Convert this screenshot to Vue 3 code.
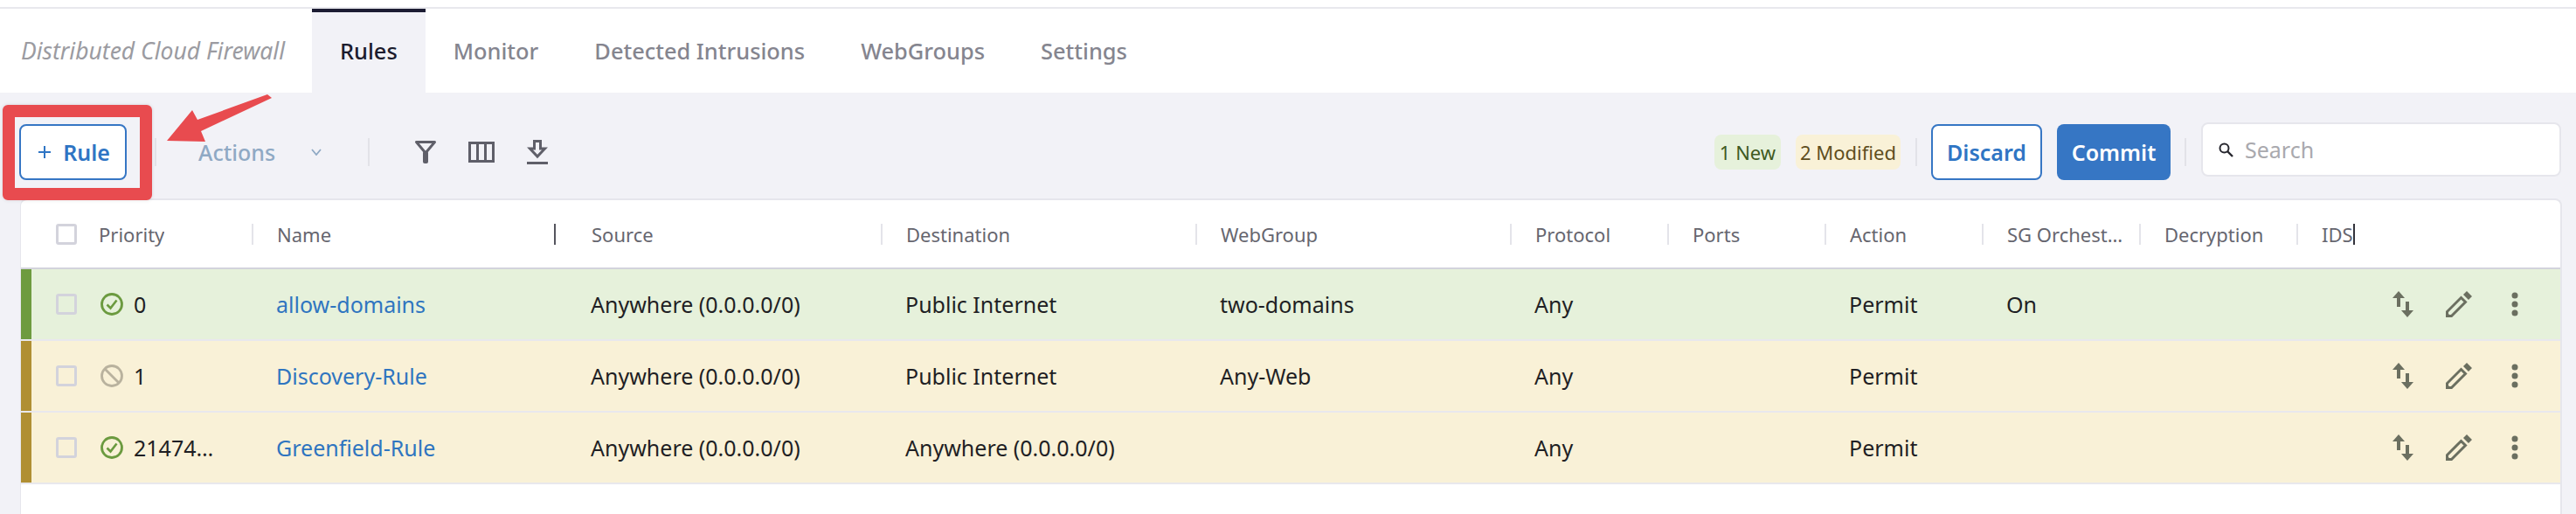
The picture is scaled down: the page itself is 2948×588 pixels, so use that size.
<script setup>
const tabs = ['Rules', 'Monitor', 'Detected Intrusions', 'WebGroups', 'Settings'];
const columns = ['Priority', 'Name', 'Source', 'Destination', 'WebGroup', 'Protocol', 'Ports', 'Action', 'SG Orchestration', 'Decryption', 'IDS'];
const rules = [
  { state: 'new', enabled: true, priority: '0', name: 'allow-domains', source: 'Anywhere (0.0.0.0/0)', destination: 'Public Internet', webgroup: 'two-domains', protocol: 'Any', action: 'Permit', sg: 'On' },
  { state: 'modified', enabled: false, priority: '1', name: 'Discovery-Rule', source: 'Anywhere (0.0.0.0/0)', destination: 'Public Internet', webgroup: 'Any-Web', protocol: 'Any', action: 'Permit', sg: '' },
  { state: 'modified', enabled: true, priority: '2147483647', name: 'Greenfield-Rule', source: 'Anywhere (0.0.0.0/0)', destination: 'Anywhere (0.0.0.0/0)', webgroup: '', protocol: 'Any', action: 'Permit', sg: '' },
];
</script>

<template>
  <div class="page">
    <div class="strip"></div>
    <nav class="tabs">
      <span class="title">Distributed Cloud Firewall</span>
      <a v-for="(tab, i) in tabs" :key="tab" class="tab" :class="{ active: i === 0 }">{{ tab }}</a>
    </nav>

    <div class="toolbar">
      <button class="btn outline add">
        <svg class="plus" width="14" height="14" viewBox="0 0 14 14"><path d="M7 0V14M0 7H14" stroke="#2f75c4" stroke-width="2" /></svg>
        Rule
      </button>
      <span class="divider first"></span>
      <span class="actions">Actions</span>
      <svg class="chevron" width="12" height="8" viewBox="0 0 12 8"><path d="M1 1l5 6 5-6" fill="none" stroke="#8fa9c4" stroke-width="1.8" /></svg>
      <span class="divider second"></span>
      <svg class="tool filter" width="26" height="26" viewBox="0 0 26 26">
        <path d="M2.5 1.5H23.5L13 14Z" fill="none" stroke="#5f5f69" stroke-width="3" stroke-linejoin="round" />
        <rect x="10" y="12" width="6" height="14" rx="2" fill="#5f5f69" />
      </svg>
      <svg class="tool cols" width="30" height="24" viewBox="0 0 30 24">
        <path d="M1.5 1.5H28.5V22.5H1.5ZM10.5 1.5V22.5M19.5 1.5V22.5" fill="none" stroke="#5f5f69" stroke-width="3" />
      </svg>
      <svg class="tool down" width="24" height="28" viewBox="0 0 24 28">
        <path d="M8.5 1.5H15.5V10H20.5L12 19L3.5 10H8.5Z" fill="none" stroke="#5f5f69" stroke-width="3" />
        <rect y="25" width="24" height="3" fill="#5f5f69" />
      </svg>

      <span class="badge green">1 New</span>
      <span class="badge yellow">2 Modified</span>
      <span class="divider third"></span>
      <button class="btn outline discard">Discard</button>
      <button class="btn solid">Commit</button>
      <span class="divider fourth"></span>
      <label class="search">
        <svg width="17" height="17" viewBox="0 0 17 17">
          <circle cx="6.5" cy="6.5" r="5" fill="none" stroke="#26262e" stroke-width="2" />
          <path d="M10 10l6 6" stroke="#26262e" stroke-width="2.4" />
        </svg>
        <input type="text" placeholder="Search" />
      </label>
    </div>

    <div class="card">
      <div class="grid head">
        <span class="check-cell"><span class="box"></span></span>
        <span v-for="(col, i) in columns" :key="col" class="head-cell" :class="{ plain: i === 0, resizing: i === 1, nosep: i === 2 }">
          <span class="clip">{{ col }}</span>
          <i v-if="i === 1" class="handle"></i>
          <i v-if="i === 10" class="caret"></i>
        </span>
      </div>

      <div v-for="rule in rules" :key="rule.name" class="grid row" :class="rule.state">
        <span class="check-cell"><span class="box"></span></span>
        <span class="cell prio">
          <svg v-if="rule.enabled" width="26" height="26" viewBox="0 0 26 26">
            <circle cx="13" cy="13" r="11.5" fill="none" stroke="#6b9a3f" stroke-width="2.8" />
            <path d="M7.5 13.5l4 4 7-9" fill="none" stroke="#6b9a3f" stroke-width="2.6" />
          </svg>
          <svg v-else width="26" height="26" viewBox="0 0 26 26">
            <circle cx="13" cy="13" r="11.5" fill="none" stroke="#b9b29e" stroke-width="2.8" />
            <path d="M5 5l16 16" stroke="#b9b29e" stroke-width="2.8" />
          </svg>
          <span class="prio-num">{{ rule.priority }}</span>
        </span>
        <a class="cell link">{{ rule.name }}</a>
        <span class="cell">{{ rule.source }}</span>
        <span class="cell">{{ rule.destination }}</span>
        <span class="cell">{{ rule.webgroup }}</span>
        <span class="cell">{{ rule.protocol }}</span>
        <span class="cell"></span>
        <span class="cell">{{ rule.action }}</span>
        <span class="cell">{{ rule.sg }}</span>
        <span class="cell"></span>
        <span class="cell row-actions">
          <svg width="24" height="30" viewBox="0 0 24 30">
            <path d="M7 0L14 8H9V18H5V8H0ZM15 12H19V22H24L17 30L10 22H15Z" />
          </svg>
          <svg class="pencil" width="30" height="30" viewBox="0 0 30 30">
            <path d="M1.5 28.5V23.5L17.5 7.5L22.5 12.5L6.5 28.5Z" fill="none" stroke-width="3" />
            <path d="M0 23L7 30H0ZM24 0L30 6L26 10L20 4Z" />
          </svg>
          <svg class="dots" width="8" height="28" viewBox="0 0 8 28">
            <circle cx="4" cy="4" r="3.5" /><circle cx="4" cy="14" r="3.5" /><circle cx="4" cy="24" r="3.5" />
          </svg>
        </span>
      </div>
    </div>

    <!-- annotation drawn over the screenshot -->
    <div class="mark"></div>
    <svg class="arrow" width="130" height="62" viewBox="0 0 130 62">
      <path d="M120 0L125 4L44 42L49 54L5 53L34 18L40 29Z" fill="#e84b4f" />
    </svg>
  </div>
</template>

<style>
html, body {
  margin: 0;
  background: #f2f2f7;
  overflow: hidden;
}
</style>

<style scoped>
.page {
  position: relative;
  width: 2948px;
  height: 588px;
  overflow: hidden;
  background: #f2f2f7;
  font-family: "Noto Sans", "Liberation Sans", sans-serif;
  font-size: 25px;
  color: #1f1f24;
}

.strip {
  height: 8px;
  background: #fff;
}
.tabs {
  display: flex;
  align-items: center;
  height: 96px;
  padding-left: 24px;
  background: #fff;
  border-top: 2px solid #e8e8ed;
  font-size: 25.4px;
}
.title {
  width: 333px;
  font-size: 26.5px;
  font-style: italic;
  color: #9b9ba1;
  white-space: nowrap;
}
.tab {
  height: 96px;
  line-height: 88px;
  padding: 0 32px;
  color: #85858f;
  font-weight: 500;
  box-sizing: border-box;
  border-top: 4px solid transparent;
}
.tab.active {
  background: #f2f2f7;
  border-top-color: #1c1c33;
  color: #1c1c2e;
}

.toolbar {
  display: flex;
  align-items: center;
  height: 64px;
  padding: 36px 17px 21px 22px;
}
.btn {
  height: 64px;
  font: inherit;
  font-weight: 600;
  border-radius: 8px;
  box-sizing: border-box;
}
.outline {
  background: #fff;
  border: 2px solid #3676c4;
  color: #2f75c4;
}
.solid {
  width: 130px;
  margin-left: 17px;
  background: #3676c4;
  border: 0;
  color: #fff;
}
.add {
  display: flex;
  align-items: center;
  justify-content: center;
  gap: 14px;
  width: 123px;
  padding: 0 0 0 3px;
}
.discard { width: 127px; margin-left: 16px; padding: 0; }
.divider {
  width: 2px;
  height: 32px;
  background: #e2e2e8;
}
.first { margin-left: 32px; }
.second { margin-left: 53px; }
.third { margin-left: 17px; }
.fourth { margin-left: 16px; }
.actions {
  margin-left: 48px;
  color: #8fa9c4;
  font-weight: 500;
}
.chevron { margin-left: 41px; }
.tool { flex: none; }
.filter { margin-left: 51px; }
.cols { margin-left: 36px; }
.down { margin-left: 37px; margin-right: auto; }
.badge {
  display: flex;
  align-items: center;
  justify-content: center;
  height: 40px;
  border-radius: 8px;
  font-size: 22px;
}
.green { width: 76px; background: #e6f1db; color: #3f5a1f; }
.yellow { width: 120px; margin-left: 17px; background: #f9f1d7; color: #5f4e1e; }
.search {
  display: flex;
  align-items: center;
  width: 412px;
  height: 62px;
  margin: -6px 0 0 17px;
  padding-left: 18px;
  background: #fff;
  border: 2px solid #e6e6ec;
  border-radius: 8px;
  box-sizing: border-box;
}
.search input {
  width: 340px;
  margin-left: 13px;
  padding: 0;
  border: 0;
  outline: 0;
  background: transparent;
  font: inherit;
}
.search input::placeholder { color: #a9a9ae; }

.card {
  height: 400px;
  margin: 0 16px 0 23px;
  background: #fff;
  border: solid #e6e6ec;
  border-width: 2px 2px 0 1px;
  border-radius: 8px 8px 0 0;
}
.grid {
  display: grid;
  grid-template-columns: 84px 180px 360px 360px 360px 360px 180px 180px 180px 180px 180px 1fr;
  align-items: center;
}
.head {
  height: 77px;
  border-bottom: 2px solid #d3d3dc;
  color: #66666f;
  font-size: 22px;
}
.check-cell { padding-left: 40px; display: flex; }
.box {
  width: 24px;
  height: 24px;
  border: 3px solid #d3d3dc;
  border-radius: 3px;
  box-sizing: border-box;
}
.head-cell {
  position: relative;
  display: flex;
  height: 24px;
  min-width: 0;
  padding: 0 16px 0 27px;
  border-left: 2px solid #e4e4ea;
  box-sizing: border-box;
}
.head-cell.plain { padding-left: 5px; border-left: 0; }
.head-cell.nosep { border-left-color: transparent; }
.clip {
  height: 34px;
  margin-top: -5px;
  line-height: 34px;
  overflow: hidden;
  white-space: nowrap;
  text-overflow: ellipsis;
}
.handle {
  position: absolute;
  top: 0;
  right: 12px;
  width: 2px;
  height: 24px;
  background: #55555e;
}
.caret {
  width: 2px;
  height: 24px;
  background: #33333b;
}

.row {
  height: 80px;
  padding-left: 12px;
  border-bottom: 2px solid #e8e8ed;
  grid-template-columns: 72px 180px 360px 360px 360px 360px 180px 180px 180px 180px 180px 1fr;
}
.row.new { background: #e6f1db; box-shadow: inset 12px 0 0 #6e9b3f; }
.row.modified { background: #f9f1d7; box-shadow: inset 12px 0 0 #b08f33; }
.row .check-cell { padding-left: 28px; }
.cell {
  padding-left: 28px;
  white-space: nowrap;
  min-width: 0;
}
.link { color: #2f75c0; padding-left: 28px; }
.prio {
  display: flex;
  align-items: center;
  padding-left: 7px;
}
.prio-num {
  width: 100px;
  margin-left: 12px;
  overflow: hidden;
  text-overflow: ellipsis;
}
.row-actions {
  display: flex;
  align-items: center;
  padding-left: 110px;
}
.row-actions svg { fill: #6b6f60; stroke: #6b6f60; stroke-width: 0; }
.pencil { margin-left: 37px; }
.dots { margin-left: 45px; }

.mark {
  position: absolute;
  left: 3px;
  top: 120px;
  width: 171px;
  height: 109px;
  border: 14px solid #e84b4f;
  border-radius: 6px;
  box-sizing: border-box;
  box-shadow: 0 0 4px rgba(0, 0, 0, 0.12);
}
.arrow {
  position: absolute;
  left: 186px;
  top: 108px;
}
</style>
